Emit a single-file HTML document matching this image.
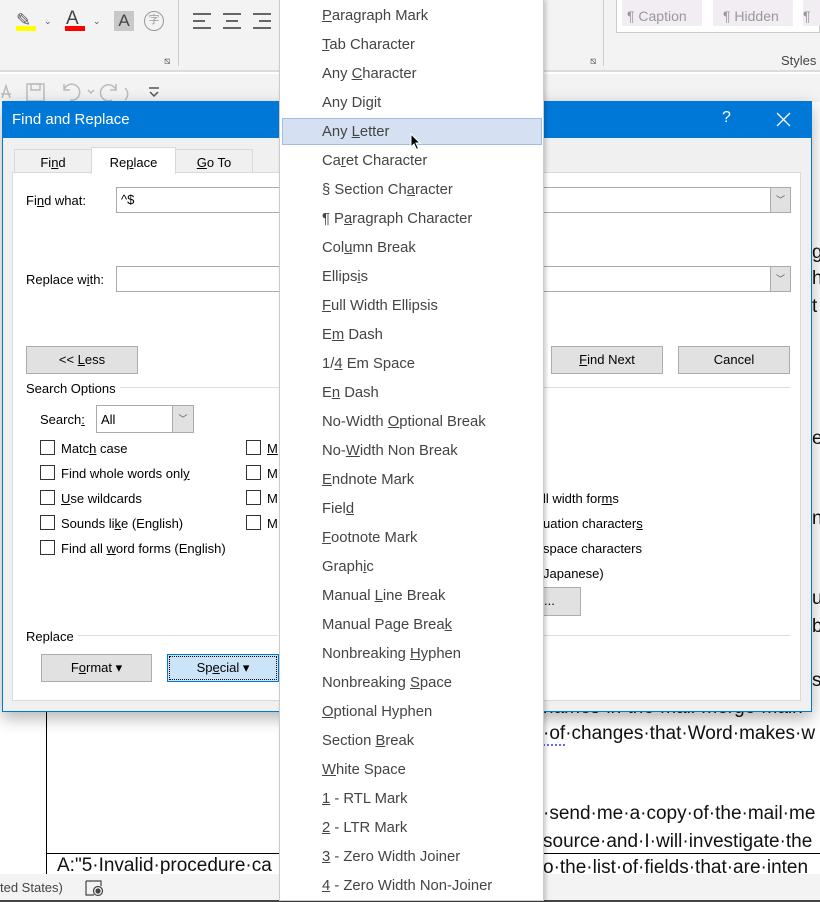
<!DOCTYPE html>
<html><head><style>
*{margin:0;padding:0;box-sizing:border-box}
body{width:820px;height:902px;position:relative;overflow:hidden;background:#fff;font-family:"Liberation Sans",sans-serif;font-size:13px;color:#000}
.a{position:absolute}
.u{text-decoration:underline}
.doc{font-size:19px;white-space:nowrap;color:#111}
.btn{position:absolute;background:#e1e1e1;border:1px solid #adadad;text-align:center;line-height:26px;font-size:13px}
.cb{position:absolute;width:15px;height:15px;border:1px solid #333;background:#fff}
.lbl{position:absolute;font-size:13px;white-space:nowrap}
.menu{position:absolute;left:279px;top:-2px;width:265px;height:903px;background:#fff;border:1px solid #ccc;box-shadow:2px 2px 4px rgba(0,0,0,.2)}
.mi{position:absolute;left:42px;font-size:14.8px;color:#444;white-space:nowrap}
</style></head><body>
<!-- ribbon -->
<div class="a" style="left:0;top:0;width:820px;height:72px;background:#f3f3f3;border-bottom:2px solid #dcdcdc"></div>
<div class="a" style="left:16px;top:10px;width:20px;height:16px;font-size:18px;color:#555">✎</div>
<div class="a" style="left:16px;top:26px;width:20px;height:5px;background:#ff0"></div>
<div class="a" style="left:44px;top:16px;font-size:9px;color:#555">⌄</div>
<div class="a" style="left:66px;top:8px;font-size:19px;color:#444">A</div>
<div class="a" style="left:65px;top:26px;width:20px;height:5px;background:#f00"></div>
<div class="a" style="left:93px;top:16px;font-size:9px;color:#555">⌄</div>
<div class="a" style="left:114px;top:11px;width:20px;height:20px;background:#c8c8c8;font-size:17px;text-align:center;color:#444">A</div>
<div class="a" style="left:144px;top:11px;width:20px;height:20px;border:1.5px solid #999;border-radius:50%;font-size:11px;text-align:center;line-height:17px;color:#999">字</div>
<div class="a" style="left:178px;top:0;width:1px;height:66px;background:#ccc"></div>
<div class="a" style="left:164px;top:56px;font-size:10px;color:#555">⧅</div>
<div class="a" style="left:193px;top:13px;width:18px;height:16px;border-top:2px solid #666;border-bottom:2px solid #666"><div style="margin-top:5px;width:12px;border-top:2px solid #666"></div></div>
<div class="a" style="left:223px;top:13px;width:18px;height:16px;border-top:2px solid #666;border-bottom:2px solid #666"><div style="margin:5px auto 0;width:12px;border-top:2px solid #666"></div></div>
<div class="a" style="left:253px;top:13px;width:18px;height:16px;border-top:2px solid #666;border-bottom:2px solid #666"><div style="margin:5px 0 0 6px;width:12px;border-top:2px solid #666"></div></div>
<div class="a" style="left:603px;top:0;width:1px;height:66px;background:#ccc"></div>
<div class="a" style="left:590px;top:56px;font-size:10px;color:#555">⧅</div>
<div class="a" style="left:616px;top:0;width:204px;height:33px;background:#fff;border:1px solid #ccc;border-top:none"></div>
<div class="a" style="left:622px;top:0;width:80px;height:26px;background:#f1edf3;color:#999;font-size:14px;line-height:32px;padding-left:5px">¶ Caption</div>
<div class="a" style="left:713px;top:0;width:80px;height:26px;background:#f1edf3;color:#999;font-size:14px;line-height:32px;padding-left:10px">¶ Hidden</div>
<div class="a" style="left:803px;top:0;width:17px;height:26px;background:#f1edf3;color:#999;font-size:14px;line-height:32px">¶</div>
<div class="a" style="left:781px;top:53px;font-size:13px;color:#444">Styles</div>
<!-- QAT -->
<div class="a" style="left:0;top:74px;width:820px;height:28px;background:#f3f3f3"></div>
<svg class="a" style="left:0;top:80px" width="170" height="22" viewBox="0 0 170 22" fill="none" stroke="#bbb" stroke-width="1.5">
<path d="M2 18 L6 6 L10 18 M1 14 H11"/>
<rect x="27" y="4" width="17" height="17"/><rect x="31" y="4" width="9" height="6"/>
<path d="M64 10 A8 8 0 1 1 70 20 M64 4 V10 H70"/>
<path d="M88 10 L91 13 L94 10"/>
<path d="M116 10 A8 8 0 1 0 112 20 M116 4 V10 H110"/>
<path d="M125 8 A8 8 0 0 1 125 20"/>
<path d="M149 8 H159 M150 12 L154 16 L158 12" stroke="#555"/>
</svg>
<!-- document -->
<div class="a" style="left:46px;top:712px;width:1px;height:162px;background:#000"></div>
<div class="a" style="left:46px;top:853px;width:500px;height:1px;background:#000"></div>
<div class="a doc" style="left:57px;top:855px">A:"5·Invalid·procedure·ca</div>
<div class="a doc" style="left:543px;top:697px">names·in·the·mail·merge·main·</div>
<div class="a doc" style="left:543px;top:723px"><span style="border-bottom:2px dotted #66f">·of</span>·changes·that·Word·makes·w</div>
<div class="a doc" style="left:543px;top:803px">·send·me·a·copy·of·the·mail·me</div>
<div class="a doc" style="left:543px;top:831px">source·and·I·will·investigate·the</div>
<div class="a" style="left:543px;top:853px;width:277px;height:1px;background:#000"></div>
<div class="a doc" style="left:543px;top:857px">o·the·list·of·fields·that·are·inten</div>
<div class="a doc" style="left:812px;top:242px">g</div><div class="a doc" style="left:812px;top:268px">h</div><div class="a doc" style="left:812px;top:296px">t</div>
<div class="a doc" style="left:812px;top:428px">e</div><div class="a doc" style="left:812px;top:508px">n</div><div class="a doc" style="left:812px;top:588px">u</div><div class="a doc" style="left:812px;top:616px">b</div><div class="a doc" style="left:812px;top:670px">s</div>
<!-- status bar -->
<div class="a" style="left:0;top:874px;width:820px;height:28px;background:#f3f3f3"></div>
<div class="a" style="left:0;top:900px;width:820px;height:2px;background:#444"></div>
<div class="a" style="left:0;top:880px;font-size:13px;color:#444">ted States)</div>
<svg class="a" style="left:85px;top:879px" width="20" height="18" viewBox="0 0 20 18" fill="none" stroke="#444" stroke-width="1.2"><path d="M1 2 H16 V7 M1 2 V16 H9"/><circle cx="13" cy="12" r="4.5"/><circle cx="13" cy="12" r="2" fill="#444"/></svg>
<!-- dialog -->
<div class="a" style="left:2px;top:101px;width:810px;height:611px;background:#f0f0f0;border:1px solid #0078d7;box-shadow:0 6px 16px rgba(0,0,0,.3)"></div>
<div class="a" style="left:2px;top:101px;width:810px;height:37px;background:#0078d7"></div>
<div class="a" style="left:12px;top:111px;color:#fff;font-size:15px">Find and Replace</div>
<div class="a" style="left:722px;top:109px;color:#fff;font-size:16px">?</div>
<svg class="a" style="left:776px;top:112px" width="15" height="15" viewBox="0 0 15 15" stroke="#fff" stroke-width="1.3"><path d="M1 1 L14 14 M14 1 L1 14"/></svg>
<div class="a" style="left:12px;top:172px;width:789px;height:529px;background:#fff;border:1px solid #d9d9d9"></div>
<div class="a" style="left:14px;top:149px;width:78px;height:24px;background:#f0f0f0;border:1px solid #d9d9d9;text-align:center;line-height:26px">Fi<span class="u">n</span>d</div>
<div class="a" style="left:175px;top:149px;width:78px;height:24px;background:#f0f0f0;border:1px solid #d9d9d9;text-align:center;line-height:26px"><span class="u">G</span>o To</div>
<div class="a" style="left:91px;top:147px;width:85px;height:27px;background:#fff;border:1px solid #d9d9d9;border-bottom:none;text-align:center;line-height:30px">Re<span class="u">p</span>lace</div>
<div class="lbl" style="left:26px;top:193px">Fi<span class="u">n</span>d what:</div>
<div class="a" style="left:116px;top:187px;width:675px;height:26px;border:1px solid #aaa;background:#fff;padding:4px 4px;font-size:13px">^$</div>
<div class="a" style="left:770px;top:188px;width:20px;height:24px;background:#e1e1e1;border-left:1px solid #aaa;font-size:9px;text-align:center;line-height:24px;color:#555">﹀</div>
<div class="lbl" style="left:26px;top:272px">Replace w<span class="u">i</span>th:</div>
<div class="a" style="left:116px;top:266px;width:675px;height:26px;border:1px solid #aaa;background:#fff"></div>
<div class="a" style="left:770px;top:267px;width:20px;height:24px;background:#e1e1e1;border-left:1px solid #aaa;font-size:9px;text-align:center;line-height:24px;color:#555">﹀</div>
<div class="btn" style="left:26px;top:346px;width:112px;height:28px">&lt;&lt; <span class="u">L</span>ess</div>
<div class="btn" style="left:551px;top:346px;width:112px;height:28px"><span class="u">F</span>ind Next</div>
<div class="btn" style="left:678px;top:346px;width:112px;height:28px">Cancel</div>
<div class="lbl" style="left:26px;top:381px">Search Options</div>
<div class="a" style="left:120px;top:387px;width:670px;height:1px;background:#ddd"></div>
<div class="lbl" style="left:40px;top:412px">Search<span class="u">:</span></div>
<div class="a" style="left:96px;top:405px;width:98px;height:28px;border:1px solid #aaa;background:#fff;padding:6px 4px">All</div>
<div class="a" style="left:172px;top:406px;width:21px;height:26px;background:#e1e1e1;border-left:1px solid #aaa;font-size:9px;text-align:center;line-height:26px;color:#555">﹀</div>
<div class="cb" style="left:40px;top:440px"></div><div class="lbl" style="left:61px;top:441px">Matc<span class="u">h</span> case</div>
<div class="cb" style="left:40px;top:465px"></div><div class="lbl" style="left:61px;top:466px">Find whole words onl<span class="u">y</span></div>
<div class="cb" style="left:40px;top:490px"></div><div class="lbl" style="left:61px;top:491px"><span class="u">U</span>se wildcards</div>
<div class="cb" style="left:40px;top:515px"></div><div class="lbl" style="left:61px;top:516px">Sounds li<span class="u">k</span>e (English)</div>
<div class="cb" style="left:40px;top:540px"></div><div class="lbl" style="left:61px;top:541px">Find all <span class="u">w</span>ord forms (English)</div>
<div class="cb" style="left:246px;top:440px"></div><div class="lbl" style="left:267px;top:441px"><span class="u">M</span></div>
<div class="cb" style="left:246px;top:465px"></div><div class="lbl" style="left:267px;top:466px">M</div>
<div class="cb" style="left:246px;top:490px"></div><div class="lbl" style="left:267px;top:491px">M</div>
<div class="cb" style="left:246px;top:515px"></div><div class="lbl" style="left:267px;top:516px">M</div>
<div class="lbl" style="left:543px;top:491px">ll width for<span class="u">m</span>s</div>
<div class="lbl" style="left:543px;top:516px">uation character<span class="u">s</span></div>
<div class="lbl" style="left:543px;top:541px">space characters</div>
<div class="lbl" style="left:543px;top:566px">Japanese)</div>
<div class="btn" style="left:530px;top:587px;width:51px;height:29px;text-align:left;padding-left:13px">...</div>
<div class="a" style="left:540px;top:635px;width:250px;height:1px;background:#ddd"></div>
<div class="lbl" style="left:26px;top:629px">Replace</div>
<div class="a" style="left:78px;top:635px;width:200px;height:1px;background:#ddd"></div>
<div class="btn" style="left:41px;top:654px;width:111px;height:28px">F<span class="u">o</span>rmat ▾</div>
<div class="btn" style="left:167px;top:654px;width:112px;height:28px;background:#cce4f7;border:1px solid #0078d7;outline:1px dotted #000;outline-offset:-3px">Sp<span class="u">e</span>cial ▾</div>
<!-- menu -->
<div class="menu">
<div class="a" style="left:2px;top:119px;width:260px;height:27px;background:#d5e1f2;border:1px solid #a3bde3"></div>
<div class="mi" style="top:9px"><span class="u">P</span>aragraph Mark</div>
<div class="mi" style="top:38px"><span class="u">T</span>ab Character</div>
<div class="mi" style="top:67px">Any <span class="u">C</span>haracter</div>
<div class="mi" style="top:96px">Any Di<span class="u">g</span>it</div>
<div class="mi" style="top:125px">Any <span class="u">L</span>etter</div>
<div class="mi" style="top:154px">Ca<span class="u">r</span>et Character</div>
<div class="mi" style="top:183px">§ Section Ch<span class="u">a</span>racter</div>
<div class="mi" style="top:212px">¶ P<span class="u">a</span>ragraph Character</div>
<div class="mi" style="top:241px">Col<span class="u">u</span>mn Break</div>
<div class="mi" style="top:270px">Ellips<span class="u">i</span>s</div>
<div class="mi" style="top:299px"><span class="u">F</span>ull Width Ellipsis</div>
<div class="mi" style="top:328px">E<span class="u">m</span> Dash</div>
<div class="mi" style="top:357px">1/<span class="u">4</span> Em Space</div>
<div class="mi" style="top:386px">E<span class="u">n</span> Dash</div>
<div class="mi" style="top:415px">No-Width <span class="u">O</span>ptional Break</div>
<div class="mi" style="top:444px">No-<span class="u">W</span>idth Non Break</div>
<div class="mi" style="top:473px"><span class="u">E</span>ndnote Mark</div>
<div class="mi" style="top:502px">Fiel<span class="u">d</span></div>
<div class="mi" style="top:531px"><span class="u">F</span>ootnote Mark</div>
<div class="mi" style="top:560px">Graph<span class="u">i</span>c</div>
<div class="mi" style="top:589px">Manual <span class="u">L</span>ine Break</div>
<div class="mi" style="top:618px">Manual Page Brea<span class="u">k</span></div>
<div class="mi" style="top:647px">Nonbreaking <span class="u">H</span>yphen</div>
<div class="mi" style="top:676px">Nonbreaking <span class="u">S</span>pace</div>
<div class="mi" style="top:705px"><span class="u">O</span>ptional Hyphen</div>
<div class="mi" style="top:734px">Section <span class="u">B</span>reak</div>
<div class="mi" style="top:763px"><span class="u">W</span>hite Space</div>
<div class="mi" style="top:792px"><span class="u">1</span> - RTL Mark</div>
<div class="mi" style="top:821px"><span class="u">2</span> - LTR Mark</div>
<div class="mi" style="top:850px"><span class="u">3</span> - Zero Width Joiner</div>
<div class="mi" style="top:879px"><span class="u">4</span> - Zero Width Non-Joiner</div>
<svg class="a" style="left:130px;top:134px" width="12" height="18" viewBox="0 0 12 18"><path d="M1 1 L1 14 L4 11 L6.5 16.5 L8.5 15.5 L6 10 L10 10 Z" fill="#000" stroke="#fff" stroke-width="1"/></svg>
</div>
</body></html>
